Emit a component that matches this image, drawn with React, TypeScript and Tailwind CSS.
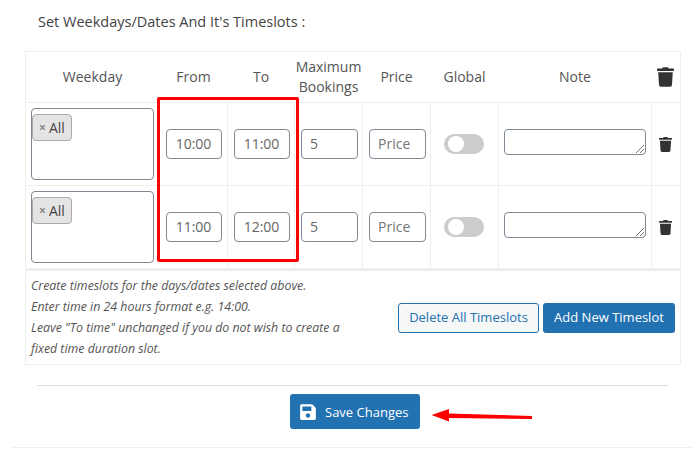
import { Fragment } from "react";

const Trash = ({ className }: { className: string }) => (
  <svg viewBox="0 0 448 512" className={className} fill="#333">
    <path d="M432 32H312l-9.4-18.7A24 24 0 0 0 281.1 0H166.8a23.72 23.72 0 0 0-21.4 13.3L136 32H16A16 16 0 0 0 0 48v32a16 16 0 0 0 16 16h416a16 16 0 0 0 16-16V48a16 16 0 0 0-16-16zM53.2 467a48 48 0 0 0 47.9 45h245.8a48 48 0 0 0 47.9-45L416 128H32z" />
  </svg>
);

const Save = () => (
  <svg viewBox="0 0 448 512" className="w-[16px] h-[18px]" fill="#fff">
    <path d="M433.9 129.9l-83.9-83.9A48 48 0 0 0 316.1 32H48C21.5 32 0 53.5 0 80v352c0 26.5 21.5 48 48 48h352c26.5 0 48-21.5 48-48V163.9a48 48 0 0 0-14.1-34zM224 416c-35.3 0-64-28.7-64-64 0-35.3 28.7-64 64-64s64 28.7 64 64c0 35.3-28.7 64-64 64zm96-304.5V212c0 6.6-5.4 12-12 12H76c-6.6 0-12-5.4-12-12V108c0-6.6 5.4-12 12-12h228.5c3.2 0 6.2 1.3 8.5 3.5l3.5 3.5a12 12 0 0 1 3.5 8.5z" />
  </svg>
);

const fieldClass =
  "h-[30px] border border-[#7e8993] rounded-[4px] bg-white text-[14px] text-[#666] flex items-center pb-[1px]";

const Header = ({ children }: { children: React.ReactNode }) => (
  <div className="flex items-center justify-center text-center text-[14px] leading-[20px] text-[#555] border-b border-[#eeeeee] pr-[1px]">
    {children}
  </div>
);

const Cell = ({ children, last, pad }: { children: React.ReactNode; last?: boolean; pad?: string }) => (
  <div className={`flex items-center ${pad ?? "justify-center"} ${last ? "" : "border-r"} border-b border-[#eeeeee]`}>
    {children}
  </div>
);

const rows = [
  ["10:00", "11:00"],
  ["11:00", "12:00"],
];

export default function App() {
  return (
    <div
      className="relative w-[691px] h-[451px] overflow-hidden bg-white text-[#444]"
      style={{ fontFamily: '"Open Sans", sans-serif' }}
    >
      <div className="pl-[38px] pt-[12px] h-[51px] text-[14.5px] leading-[20px] font-medium text-[#444]">
        Set Weekdays/Dates And It's Timeslots :
      </div>

      <div className="ml-[25px] w-[656px] h-[314px] border border-[#eeeeee] flex flex-col">
        <div className="grid grid-cols-[134px_68px_67px_68px_68px_68px_153px_1fr] grid-rows-[51px_83px_83px] border-b-2 border-[#eeeeee] box-content">
          <Header>Weekday</Header>
          <Header>From</Header>
          <Header>To</Header>
          <Header>
            Maximum
            <br />
            Bookings
          </Header>
          <Header>Price</Header>
          <Header>Global</Header>
          <Header>Note</Header>
          <Header>
            <Trash className="w-[17px] h-[20px] -mt-[1px]" />
          </Header>

          {rows.map(([from, to], i) => (
            <Fragment key={i}>
              <div className="border-b border-[#eeeeee] pl-[5px] pt-[5px]">
                <div className="w-[123px] h-[72px] border border-[#7e8993] rounded-[4px] bg-white pt-[5px]">
                  <div className="w-[40px] h-[27px] bg-[#e4e4e4] border border-[#aaaaaa] rounded-[4px] flex items-center pl-[6px] gap-[3px] text-[14px] text-[#444]">
                    <span className="text-[#888] text-[12px] font-bold leading-none">×</span>
                    <span>All</span>
                  </div>
                </div>
              </div>
              <Cell pad="pl-[6px]">
                <div className={`${fieldClass} w-[56px] justify-center pr-[1px]`}>{from}</div>
              </Cell>
              <Cell pad="pl-[6px]">
                <div className={`${fieldClass} w-[56px] justify-center pr-[1px]`}>{to}</div>
              </Cell>
              <Cell pad="pl-[6px]">
                <div className={`${fieldClass} w-[57px] pl-[8px]`}>5</div>
              </Cell>
              <Cell pad="pl-[6px]">
                <div className={`${fieldClass} w-[57px] pl-[8px] text-[#757575]`}>Price</div>
              </Cell>
              <Cell pad="pl-[13px]">
                <div className="w-[40px] h-[20px] rounded-full bg-[#cccccc] pl-[4px] flex items-center">
                  <div className="w-[16px] h-[16px] rounded-full bg-white" />
                </div>
              </Cell>
              <Cell pad="pl-[5px]">
                <div className="relative w-[142px] h-[26px] -mt-[4px] border border-[#7e8993] rounded-[4px] bg-white">
                  <svg viewBox="0 0 10 10" className="absolute right-0 bottom-0 w-[10px] h-[10px]" stroke="#777" strokeWidth="1">
                    <path d="M1 9L9 1M5 9L9 5" />
                  </svg>
                </div>
              </Cell>
              <Cell last>
                <Trash className="w-[13px] h-[15px] mr-[1px]" />
              </Cell>
            </Fragment>
          ))}
        </div>

        <div className="flex flex-1 items-center justify-between pl-[5px] pr-[5px]">
          <div className="w-[330px] -mt-[2px] text-[12.35px] leading-[21px] italic text-[#555]">
            Create timeslots for the days/dates selected above.
            <br />
            Enter time in 24 hours format e.g. 14:00.
            <br />
            Leave "To time" unchanged if you do not wish to create a
            <br />
            fixed time duration slot.
          </div>
          <div className="flex gap-[4px]">
            <div className="h-[30px] w-[141px] border border-[#2271b1] rounded-[3px] bg-[#f6f7f7] text-[#2271b1] text-[13px] flex items-center justify-center">
              Delete All Timeslots
            </div>
            <div className="h-[30px] w-[132px] rounded-[3px] bg-[#2271b1] text-white text-[13px] font-medium flex items-center justify-center">
              Add New Timeslot
            </div>
          </div>
        </div>
      </div>

      <div className="ml-[37px] mt-[20px] w-[631px] border-t border-[#dddddd]" />

      <div className="flex justify-start ml-[290px] mt-[8px]">
        <div className="h-[35px] w-[130px] rounded-[3px] bg-[#2271b1] text-white text-[13px] font-medium flex items-center pl-[10px] gap-[9px]">
          <Save />
          <span className="pt-[2px]">Save Changes</span>
        </div>
      </div>

      <div className="ml-[13px] mt-[18px] border-t border-[#eeeeee]" />

      {/* Annotation box */}
      <div className="absolute left-[157px] top-[97px] w-[142px] h-[165px] border-[3px] border-[#ff0000] rounded-[2px]" />

      {/* Annotation arrow */}
      <svg className="absolute left-[430px] top-[400px] w-[105px] h-[30px]" viewBox="0 0 105 30" fill="#ff0000">
        <path d="M1.5 15L19 9V13.5L102 16L102 19L19 18V21.5Z" />
      </svg>
    </div>
  );
}
